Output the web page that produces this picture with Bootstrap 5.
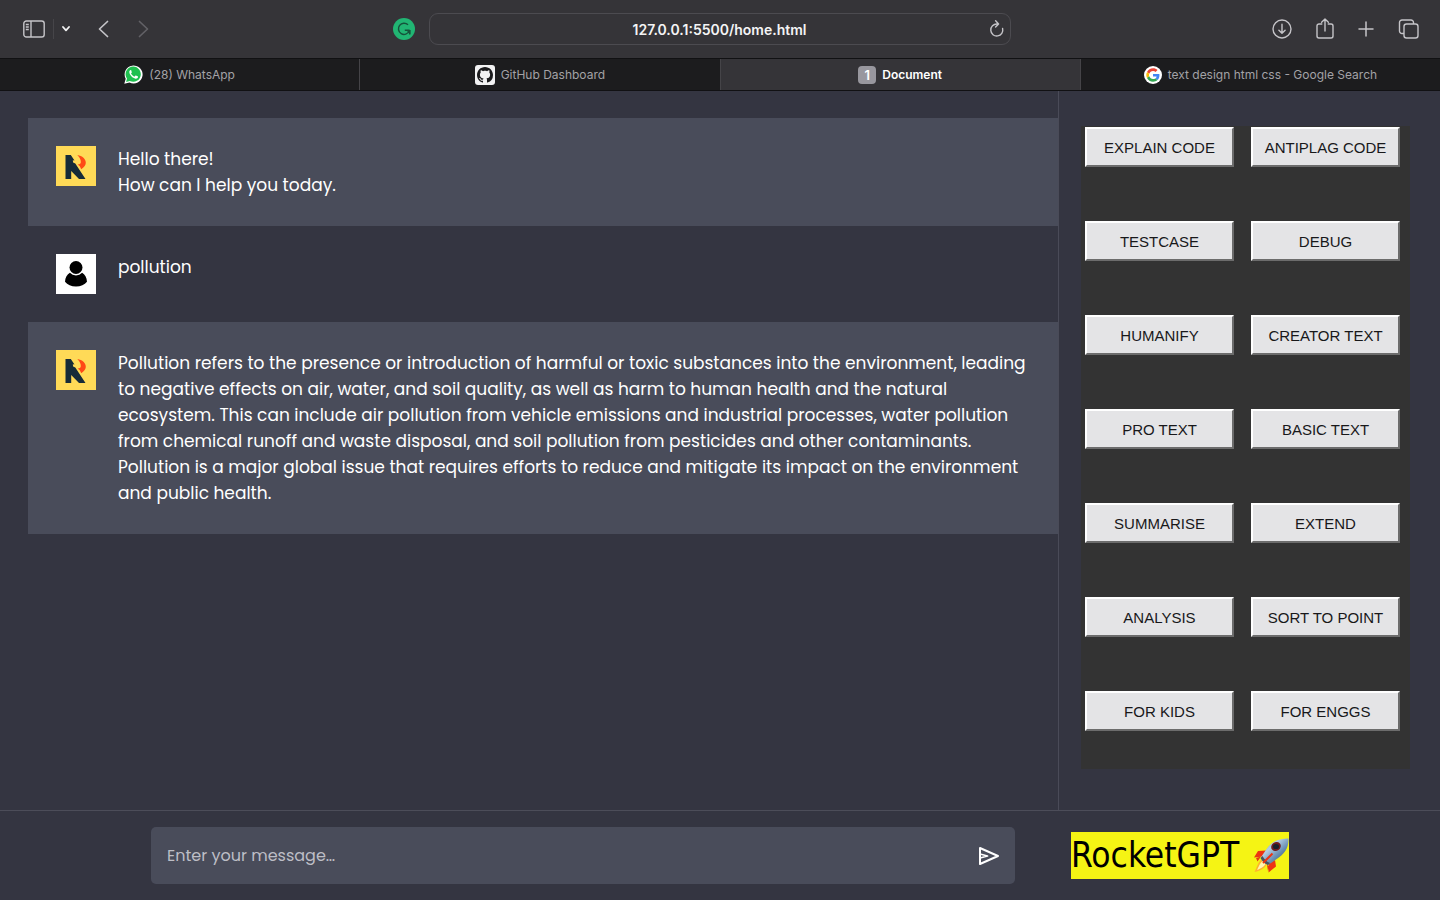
<!DOCTYPE html>
<html lang="en">
<head>
<meta charset="utf-8">
<meta name="viewport" content="width=device-width, initial-scale=1">
<title>Document</title>
<link href="https://cdn.jsdelivr.net/npm/bootstrap@5.3.0/dist/css/bootstrap.min.css" rel="stylesheet">
<style>
  body { background: #343541; color: #fff; font-family: "Poppins", "Inter", sans-serif; }
  .chrome { font-family: "Inter", sans-serif; background: #353438; color: #c5c4c8; }
  .toolbar { display: grid; grid-template-columns: 1fr minmax(0, 582px) 1fr; column-gap: 14px; height: 58px; padding: 0 20px 0 19px; }
  .chrome button { background: none; border: 0; padding: 0; color: inherit; display: flex; }
  .chrome .faded { color: #626166; }
  .split { width: 1px; height: 20px; background: #464549; }
  .address { height: 32px; border: 1px solid #4c4b50; border-radius: 9px; background: transparent; color: #f4f4f5; font-size: 14px; font-weight: 600; text-align: center; width: 100%; outline: 0; }
  .reload { top: 6px; right: 5px; }
  .tabstrip { height: 33px; border-top: 1px solid #111113; border-bottom: 1px solid #111113; }
  .tab { flex: 1 1 0; background: #1c1c1e; color: #a3a2a6; font-size: 12px; text-decoration: none; gap: 6px; min-width: 0; }
  .tab + .tab { border-left: 1px solid #454448; }
  .tab.current { background: #353438; color: #fff; font-weight: 600; }
  .tabnum { width: 18px; height: 18px; border-radius: 4px; background: #98979e; color: #fff; font-size: 13px; line-height: 18px; text-align: center; }
  .chat { padding-top: 27px; padding-left: 28px; border-right: 1px solid #4a4b58; min-width: 0; }
  .msg { padding: 28px; gap: 22px; font-size: 17px; line-height: 26px; }
  .msg.bot { background: #494c5a; }
  .side { width: 381px; padding: 35px 30px 40px 22px; }
  .panel { background: #333; padding: 1px 10px 38px 4px; display: grid; grid-template-columns: 1fr 1fr; column-gap: 17px; row-gap: 54px; }
  .tool { height: 40px; background: #e4e4e6; color: #18181a; border: 2px solid; border-color: #fff #6c6c6c #6c6c6c #fff; font: 15px "Liberation Sans", sans-serif; padding: 0; white-space: nowrap; }
  .composer { border-top: 1px solid #4c4d59; padding: 16px 0; gap: 56px; }
  .entry { width: 60%; height: 57px; background: #494c5a; border-radius: 5px; padding: 0 15px 0 16px; }
  .entry input { background: none; border: 0; outline: 0; color: #fff; font-size: 16px; min-width: 0; }
  .entry input::placeholder { color: #bdbec6; opacity: 1; }
  .entry button { background: none; border: 0; padding: 0; display: flex; }
  .brand { background: #f5f414; color: #000; width: 218px; height: 47px; font: 35px/47px "DejaVu Sans Condensed", "DejaVu Sans", sans-serif; white-space: nowrap; }
</style>
</head>
<body class="d-flex flex-column min-vh-100">

<header class="chrome">
  <div class="toolbar align-items-center">
    <div class="d-flex align-items-center">
      <button aria-label="Sidebar" class="ms-1"><svg width="22" height="18" viewBox="0 0 22 18" fill="none" stroke="currentColor" stroke-width="1.4"><rect x=".8" y="1" width="20.4" height="16" rx="2.6"/><path d="M8 1v16M2.800 4.500h3M2.800 7h3M2.800 9.500h3"/></svg></button>
      <span class="split ms-2"></span>
      <button aria-label="Tab groups" class="ms-2"><svg width="8" height="6" viewBox="0 0 8 6" fill="none" stroke="#f2f2f3" stroke-width="1.8" stroke-linecap="round" stroke-linejoin="round"><path d="M1 1l3 3.400L7 1"/></svg></button>
      <button aria-label="Back" class="ms-4 ps-1"><svg width="12" height="18" viewBox="0 0 12 18" fill="none" stroke="currentColor" stroke-width="1.7" stroke-linecap="round" stroke-linejoin="round"><path d="M9.500 1.500L1.500 9l8 7.500"/></svg></button>
      <button aria-label="Forward" class="faded ms-4 ps-1"><svg width="12" height="18" viewBox="0 0 12 18" fill="none" stroke="currentColor" stroke-width="1.7" stroke-linecap="round" stroke-linejoin="round"><path d="M1.500 1.500L9.500 9l-8 7.500"/></svg></button>
      <button aria-label="Grammarly" class="ms-auto"><svg width="22" height="22" viewBox="0 0 22 22"><circle cx="11" cy="11" r="11" fill="#21b573"/><path d="M15 6.800A5.600 5.600 0 1 0 16.200 13M11.800 12.200h4.800M16.700 12v4.600" fill="none" stroke="#15533b" stroke-width="1.500"/><path d="M13 12h4.300v4.300z" fill="#15533b"/></svg></button>
    </div>
    <div class="position-relative">
      <input class="address" type="text" aria-label="Address" value="127.0.0.1:5500/home.html">
      <button aria-label="Reload" class="reload position-absolute"><svg width="18" height="20" viewBox="0 0 18 20" fill="none" stroke="currentColor" stroke-width="1.400" stroke-linecap="round" stroke-linejoin="round"><path d="M14.600 9.500A6 6 0 1 1 9 5h1.200M7.600 1.800l3 3.100-3 3"/></svg></button>
    </div>
    <div class="d-flex align-items-center justify-content-end gap-4">
      <button aria-label="Downloads"><svg width="20" height="20" viewBox="0 0 20 20" fill="none" stroke="currentColor" stroke-width="1.400" stroke-linecap="round" stroke-linejoin="round"><circle cx="10" cy="10" r="9"/><path d="M10 5.300v8.800M6.900 11.200l3.100 3.100 3.100-3.100"/></svg></button>
      <button aria-label="Share"><svg width="18" height="22" viewBox="0 0 18 22" fill="none" stroke="currentColor" stroke-width="1.400" stroke-linecap="round" stroke-linejoin="round"><path d="M5.800 6H3a2 2 0 0 0-2 2v10a2 2 0 0 0 2 2h12a2 2 0 0 0 2-2V8a2 2 0 0 0-2-2h-2.800M9 13V1M5.600 4.200L9 1l3.400 3.200"/></svg></button>
      <button aria-label="New tab"><svg width="16" height="16" viewBox="0 0 16 16" stroke="currentColor" stroke-width="1.500" stroke-linecap="round"><path d="M8 1v14M1 8h14"/></svg></button>
      <button aria-label="Tab overview"><svg width="22" height="20" viewBox="0 0 22 20" fill="none" stroke="currentColor" stroke-width="1.400"><rect x="6" y="5" width="14" height="14" rx="2.500"/><path d="M6 14.500H4A2.500 2.500 0 0 1 1.500 12V3.500A2.500 2.500 0 0 1 4 1h9a2.500 2.500 0 0 1 2.500 2.500V5"/></svg></button>
    </div>
  </div>
  <nav class="tabstrip d-flex" aria-label="Tabs">
    <a href="#" class="tab d-flex align-items-center justify-content-center"><svg width="19" height="19" viewBox="0 0 19 19"><path d="M.3 18.700l1.400-4.900A9 9 0 1 1 5.500 17.500z" fill="#fff"/><path d="M2.100 16.900l.9-3.300A7.600 7.600 0 1 1 5.800 16z" fill="#1fc04f"/><path d="M6.700 5c-.8.100-1.500 1-1.400 2.100.2 3 3.300 6.200 6.300 6.600 1.200.1 2.300-.5 2.400-1.600.1-.5 0-.6-.4-.8l-1.700-.8c-.4-.2-.6 0-1.200.9-.2.200-.4.200-.7.100-1.200-.6-2.200-1.500-2.900-2.700-.2-.4.700-1 .7-1.500L7.300 5.400C7.200 5.100 7 5 6.700 5z" fill="#fff"/></svg>(28) WhatsApp</a>
    <a href="#" class="tab d-flex align-items-center justify-content-center"><svg width="20" height="20" viewBox="0 0 20 20"><rect width="20" height="20" rx="3" fill="#f2f2f3"/><path transform="translate(2 2)" d="M8 0C3.580 0 0 3.580 0 8c0 3.540 2.290 6.530 5.470 7.590.4.070.55-.17.55-.38 0-.19-.01-.82-.01-1.490-2.010.37-2.530-.49-2.690-.94-.09-.23-.48-.94-.82-1.130-.28-.15-.68-.52-.01-.53.63-.01 1.080.58 1.230.82.72 1.210 1.870.87 2.330.66.07-.52.28-.87.51-1.070-1.780-.2-3.640-.89-3.640-3.950 0-.87.31-1.590.82-2.150-.08-.2-.36-1.020.08-2.120 0 0 .67-.21 2.200.82.64-.18 1.320-.27 2-.27s1.360.09 2 .27c1.530-1.040 2.200-.82 2.200-.82.44 1.100.16 1.920.08 2.120.51.56.82 1.270.82 2.150 0 3.070-1.870 3.750-3.650 3.950.29.25.54.73.54 1.480 0 1.070-.01 1.930-.01 2.200 0 .21.15.46.55.38A8.010 8.010 0 0 0 16 8c0-4.420-3.580-8-8-8z" fill="#1b1b1d"/></svg>GitHub Dashboard</a>
    <a href="#" class="tab current d-flex align-items-center justify-content-center" aria-current="page"><span class="tabnum">1</span>Document</a>
    <a href="#" class="tab d-flex align-items-center justify-content-center"><svg width="18" height="18" viewBox="0 0 18 18"><circle cx="9" cy="9" r="9" fill="#fff"/><g transform="translate(2.300 2.300) scale(.28)"><path fill="#EA4335" d="M24 9.500c3.540 0 6.710 1.220 9.210 3.600l6.850-6.850C35.900 2.380 30.470 0 24 0 14.620 0 6.510 5.380 2.560 13.220l7.980 6.190C12.430 13.720 17.740 9.500 24 9.500z"/><path fill="#4285F4" d="M46.980 24.550c0-1.570-.15-3.090-.38-4.550H24v9.020h12.940c-.58 2.960-2.260 5.480-4.780 7.180l7.730 6c4.510-4.180 7.090-10.360 7.090-17.650z"/><path fill="#FBBC05" d="M10.530 28.590c-.48-1.450-.76-2.990-.76-4.590s.27-3.140.76-4.590l-7.980-6.190C.92 16.460 0 20.120 0 24c0 3.880.92 7.540 2.560 10.780l7.970-6.190z"/><path fill="#34A853" d="M24 48c6.480 0 11.930-2.130 15.890-5.810l-7.730-6c-2.150 1.450-4.920 2.300-8.160 2.300-6.260 0-11.570-4.220-13.470-9.910l-7.980 6.190C6.510 42.620 14.620 48 24 48z"/></g></svg>text design html css - Google Search</a>
  </nav>
</header>

<svg class="d-none" aria-hidden="true">
  <symbol id="bot" viewBox="0 0 40 40"><path fill="#ffda57" d="M0 0h40v40H0z"/><path fill="#162b38" d="M9.500 9h5.300l3.700 5.500-1.700-.3.300 2.300 2.200 1L29.500 33H23l-7.800-8v8H9.500z"/><path fill="#ff4a16" d="M21.300 9c5 .7 8.700 4 8.500 8-.2 2.600-1.700 4.300-4.600 6.300l-1.400-3-2.200-1.800c2.500-.5 3.200-1.200 3.200-2.600.1-2.400-1.200-4.300-3.500-6.900z"/></symbol>
</svg>

<main class="d-flex flex-grow-1">
  <section class="chat flex-grow-1">
    <article class="msg bot d-flex"><svg class="flex-shrink-0" width="40" height="40" role="img" aria-label="Assistant"><use href="#bot"/></svg><div>Hello there!<br>How can I help you today.</div></article>
    <article class="msg d-flex"><svg class="flex-shrink-0" width="40" height="40" viewBox="0 0 40 40" role="img" aria-label="You"><path fill="#fff" d="M0 0h40v40H0z"/><circle cx="20" cy="13.500" r="6.500"/><path d="M13.900 18.800a8.400 8.400 0 0 0 12.200 0c2.800 1.600 4.700 4.800 4.900 9-2.400 3-6.300 4.700-11 4.700s-8.600-1.700-11-4.700c.2-4.200 2.100-7.400 4.900-9z"/></svg><div>pollution</div></article>
    <article class="msg bot d-flex"><svg class="flex-shrink-0" width="40" height="40" role="img" aria-label="Assistant"><use href="#bot"/></svg><div>Pollution refers to the presence or introduction of harmful or toxic substances into the environment, leading to negative effects on air, water, and soil quality, as well as harm to human health and the natural ecosystem. This can include air pollution from vehicle emissions and industrial processes, water pollution from chemical runoff and waste disposal, and soil pollution from pesticides and other contaminants. Pollution is a major global issue that requires efforts to reduce and mitigate its impact on the environment and public health.</div></article>
  </section>
  <aside class="side flex-shrink-0">
    <div class="panel">
      <button class="tool">EXPLAIN CODE</button><button class="tool">ANTIPLAG CODE</button>
      <button class="tool">TESTCASE</button><button class="tool">DEBUG</button>
      <button class="tool">HUMANIFY</button><button class="tool">CREATOR TEXT</button>
      <button class="tool">PRO TEXT</button><button class="tool">BASIC TEXT</button>
      <button class="tool">SUMMARISE</button><button class="tool">EXTEND</button>
      <button class="tool">ANALYSIS</button><button class="tool">SORT TO POINT</button>
      <button class="tool">FOR KIDS</button><button class="tool">FOR ENGGS</button>
    </div>
  </aside>
</main>

<footer class="composer d-flex justify-content-center align-items-center">
  <form class="entry d-flex align-items-center">
    <input class="flex-grow-1 p-0" type="text" aria-label="Message" placeholder="Enter your message…">
    <button type="button" aria-label="Send"><svg width="22" height="20" viewBox="0 0 22 20" fill="none" stroke="#fff" stroke-width="2" stroke-linejoin="round"><path d="M2 2l18 8-18 8z"/><path d="M2 8l7.500 2L2 12" stroke-width="1.700"/></svg></button>
  </form>
  <div class="brand d-flex align-items-center justify-content-between"><span>RocketGPT</span>
    <svg width="37" height="37" viewBox="0 0 37 37" role="img" aria-label="Rocket">
      <defs><linearGradient id="hull" x1="0" y1="0" x2="1" y2="1"><stop offset="0" stop-color="#4a7ba6"/><stop offset=".35" stop-color="#b5cee2"/><stop offset=".6" stop-color="#6b91b6"/><stop offset="1" stop-color="#23364d"/></linearGradient></defs>
      <path d="M14 13.500L6 14l-4 6.500 9-1zM23 23l1 6.500-7.500 6 .5-9z" fill="#ed3312"/>
      <path d="M4 21l5-1.500-3.500 5zM15 28l1 6 2-5z" fill="#e23b12"/>
      <path d="M10 22l5 4.500c-2 5-6 7-12.500 8.500C5 30 6 25 10 22z" fill="#ffb52b"/><path d="M10.500 24l3 3c-1.700 3-4.500 4.500-8.500 6 2-4 3-7 5.500-9z" fill="#fff5ae"/>
      <path d="M36.500 1.500C27 1 18.500 5 13.500 13.500L8.500 21c1.800 3.500 4 5.500 7.500 7l8-5.500C32.500 17.500 37 10.500 36.500 1.500z" fill="url(#hull)"/>
      <path d="M8.500 21c1.800 3.500 4 5.500 7.500 7l2-2c-3-1-5.500-3.500-7.500-7z" fill="#49525f"/>
      <ellipse cx="24" cy="9.500" rx="5" ry="4.300" transform="rotate(-35 24 9.500)" fill="#6e1b1d"/><ellipse cx="24" cy="9.500" rx="3" ry="2.600" fill="#16202d"/>
      <path d="M20.500 16.500L11 26" stroke="#ed3312" stroke-width="2"/>
    </svg>
  </div>
</footer>
<script src="https://cdn.jsdelivr.net/npm/bootstrap@5.3.0/dist/js/bootstrap.bundle.min.js"></script>
</body>
</html>
